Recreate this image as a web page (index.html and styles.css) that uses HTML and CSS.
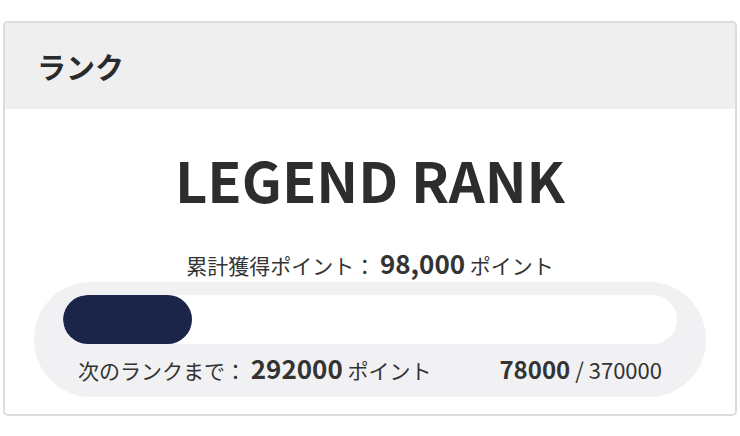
FILE: index.html
```html
<!DOCTYPE html>
<html lang="ja">
<head>
<meta charset="utf-8">
<link rel="stylesheet" href="styles.css">
</head>
<body>
<div class="card">
  <div class="card-header">ランク</div>
  <div class="card-body">
    <div class="rank-name">LEGEND RANK</div>
    <div class="total">累計獲得ポイント： <b class="total-num">98,000</b> ポイント</div>
    <div class="progress-box">
      <div class="track"><div class="fill" style="width:21%"></div></div>
      <div class="progress-info">
        <div class="next">次のランクまで： <b class="next-num">292000</b> ポイント</div>
        <div class="ratio"><b class="ratio-cur">78000</b> / 370000</div>
      </div>
    </div>
  </div>
</div>
</body>
</html>
```

FILE: styles.css
```css
html, body {
  margin: 0;
  padding: 0;
  background: #ffffff;
}
body {
  font-family: "Noto Sans CJK JP", "Noto Sans", sans-serif;
  color: #2b2b2b;
  padding: 21px 3px 0 3px;
}
.card {
  width: 734px;
  height: 395px;
  box-sizing: border-box;
  border: 2px solid #dcdcdc;
  border-radius: 5px;
  overflow: hidden;
  background: #fff;
}
.card-header {
  background: #f0eff0;
  height: 86px;
  box-sizing: border-box;
  padding-left: 32px;
  display: flex;
  align-items: center;
  font-size: 29px;
  font-weight: 700;
  color: #2a2a2a;
}
.card-body {
  display: flex;
  flex-direction: column;
  align-items: center;
  padding-top: 34px;
}
.rank-name {
  font-size: 56px;
  font-weight: 700;
  line-height: 72px;
  color: #2d2d2d;
}
.total {
  margin-top: 32px;
  font-size: 21px;
  line-height: 32px;
  color: #333;
}
.total-num {
  font-size: 26px;
}
.progress-box {
  margin-top: 1px;
  width: 672px;
  height: 115px;
  box-sizing: border-box;
  background: #f1f1f3;
  border-radius: 57px;
  padding: 13px 29px 0 29px;
}
.track {
  height: 49px;
  background: #fff;
  border-radius: 25px;
  overflow: hidden;
}
.fill {
  height: 100%;
  background: #1b2449;
  border-radius: 25px;
}
.progress-info {
  display: flex;
  justify-content: space-between;
  align-items: baseline;
  padding: 8px 15px 0 15px;
  font-size: 21px;
  line-height: 32px;
  color: #333;
}
.next-num {
  font-size: 26px;
}
.ratio {
  font-size: 22px;
}
.ratio-cur {
  font-size: 24px;
}
```
